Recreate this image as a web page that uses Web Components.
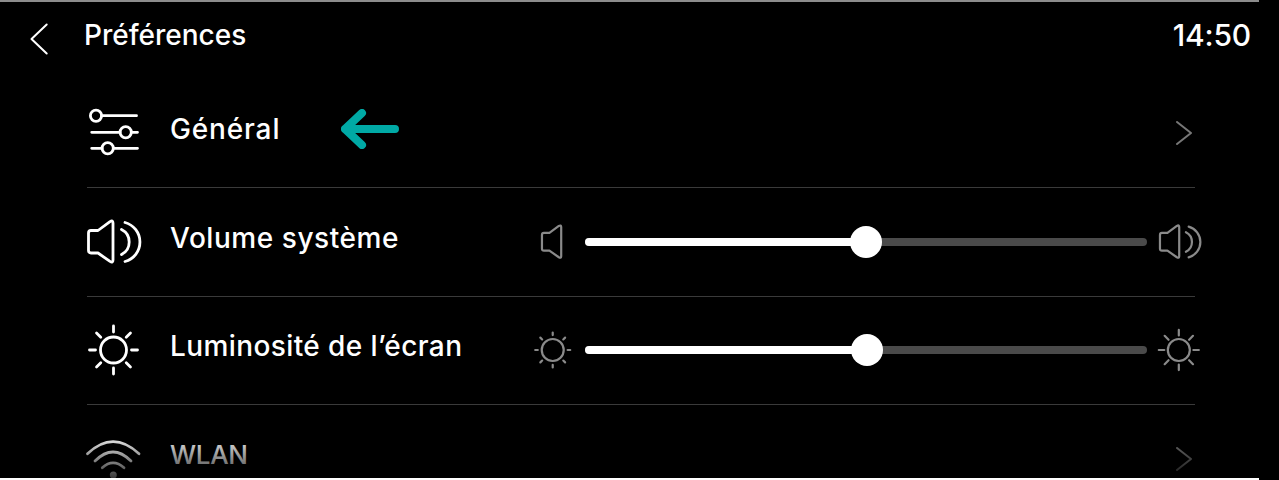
<!DOCTYPE html>
<html lang="fr">
<head>
<meta charset="utf-8">
<title>Préférences</title>
<style>
    html, body { margin: 0; background: #000; }
    body { width: 1279px; height: 480px; overflow: hidden; }
</style>
</head>
<body>
<pref-screen>
    <top-bar title="Préférences" time="14:50"></top-bar>
    <settings-row icon="sliders" style="letter-spacing: .85px">
        Général
        <hint-arrow></hint-arrow>
        <row-chevron slot="control"></row-chevron>
    </settings-row>
    <settings-row icon="speaker" style="letter-spacing: .55px">
        Volume système
        <level-slider slot="control" low="speaker-low" high="speaker-high" value="50"></level-slider>
    </settings-row>
    <settings-row icon="sun" style="letter-spacing: .4px">
        Luminosité de l’écran
        <level-slider slot="control" low="sun-low" high="sun-high" value="50.2"></level-slider>
    </settings-row>
    <settings-row icon="wifi" style="font-size: 26px; letter-spacing: -.3px">
        WLAN
        <row-chevron slot="control"></row-chevron>
    </settings-row>
</pref-screen>

<script>
const speakerBody = '<path d="M5 16.5H12L24 7.6Q27 5.8 27 9V46Q27 49.2 24 47.4L12 39H5Q2.5 39 2.5 36.5V19Q2.5 16.5 5 16.5Z"/>';
const speakerWaves = '<path d="M35.5 15.5A14 14 0 0 1 35.5 40.5"/><path d="M39 8.5A20.2 20.2 0 0 1 39 47.5"/>';

function sunRays(cx, cy, from, to) {
    let d = '';
    for (let i = 0; i < 8; i++) {
        const a = i * Math.PI / 4;
        const c = Math.cos(a), s = Math.sin(a);
        d += `M${(cx + c * from).toFixed(2)} ${(cy + s * from).toFixed(2)}L${(cx + c * to).toFixed(2)} ${(cy + s * to).toFixed(2)}`;
    }
    return `<path d="${d}"/>`;
}

const icons = {
    sliders: {
        box: '0 0 56 56',
        body: `<circle cx="10" cy="10.7" r="5.6"/><path d="M15.6 10.7H50.5"/>
               <circle cx="39.7" cy="27.3" r="5.6"/><path d="M5.7 27.3H34.1M45.3 27.3H51.5"/>
               <circle cx="21.7" cy="43.3" r="5.6"/><path d="M5.7 43.3H16.1M27.3 43.3H51.5"/>`
    },
    speaker: { box: '0 0 56 56', body: speakerBody + speakerWaves },
    sun: {
        box: '0 0 56 56',
        body: '<circle cx="27.5" cy="28" r="13"/>' + sunRays(27.5, 28, 18, 24)
    },
    wifi: {
        box: '0 0 56 56',
        body: `<path d="M1.5 22.7Q27 -1.5 53 22.7"/><path d="M9 30Q27 12 45 30"/><path d="M16.3 36.7Q27 27 38 36.7"/>
               <circle cx="27.3" cy="44" r="3.5" fill="currentColor" stroke="none"/>`
    },
    'speaker-low': { box: '0 0 43.3 56', body: speakerBody },
    'speaker-high': { box: '0 0 56 56', body: speakerBody + speakerWaves },
    'sun-low': {
        box: '0 0 43.3 56',
        body: '<circle cx="16.2" cy="28" r="14"/>' + sunRays(16.2, 28, 19, 22.3)
    },
    'sun-high': {
        box: '0 0 56 56',
        body: '<circle cx="26.5" cy="28" r="14"/>' + sunRays(26.5, 28, 18.5, 25.5)
    }
};

class PrefIcon extends HTMLElement {
    constructor() {
        super();
        this.root = this.attachShadow({ mode: 'open' });
    }

    static get observedAttributes() {
        return ['name'];
    }

    attributeChangedCallback() {
        this.render();
    }

    render() {
        const icon = icons[this.getAttribute('name')];
        this.root.innerHTML = `
            <style>
                :host { display: block; flex: none; line-height: 0; }
                svg { width: 100%; height: 100%; overflow: visible; fill: none; stroke: currentColor; stroke-width: 2.8; stroke-linecap: round; stroke-linejoin: round; }
            </style>
            <svg viewBox="${icon.box}">${icon.body}</svg>`;
    }
}

class PrefScreen extends HTMLElement {
    constructor() {
        super();
        this.root = this.attachShadow({ mode: 'open' });
        this.root.innerHTML = `
            <style>
                :host { display: flex; flex-direction: column; width: 1279px; height: 480px; background: #000; color: #fff; font-family: Inter, "Liberation Sans", sans-serif; font-weight: 500; }
                .edge { flex: none; width: 1259px; height: 2px; }
                .top { background: #8c8c8c; }
                .bottom { background: #fff; }
                .view { position: relative; flex: 1; min-height: 0; overflow: hidden; display: flex; flex-direction: column; }
                .fade { position: absolute; left: 0; right: 0; bottom: 0; height: 46px; background: linear-gradient(rgba(0,0,0,0), rgba(0,0,0,.78)); }
            </style>
            <div class="edge top"></div>
            <div class="view">
                <slot></slot>
                <div class="fade"></div>
            </div>
            <div class="edge bottom"></div>`;
    }
}

class TopBar extends HTMLElement {
    constructor() {
        super();
        this.root = this.attachShadow({ mode: 'open' });
        this.root.innerHTML = `
            <style>
                :host { display: flex; flex: none; align-items: flex-start; box-sizing: border-box; height: 77.5px; padding: 21px 28px 0 31px; }
                svg { flex: none; width: 16px; height: 30px; margin-top: 1px; overflow: visible; fill: none; stroke: #fff; stroke-width: 2; stroke-linecap: round; stroke-linejoin: round; }
                .title { margin-left: 37px; font-size: 28px; line-height: 24px; letter-spacing: 0; }
                .time { margin-left: auto; font-size: 30px; line-height: 24px; letter-spacing: -.2px; }
            </style>
            <svg viewBox="0 0 16 30"><path d="M15.7 0.5L0.5 15L15.7 29.5"/></svg>
            <div class="title"></div>
            <div class="time"></div>`;
    }

    connectedCallback() {
        this.root.querySelector('.title').textContent = this.getAttribute('title');
        this.root.querySelector('.time').textContent = this.getAttribute('time');
    }
}

class SettingsRow extends HTMLElement {
    constructor() {
        super();
        this.root = this.attachShadow({ mode: 'open' });
        this.root.innerHTML = `
            <style>
                :host { display: flex; flex: none; align-items: center; box-sizing: border-box; width: 1108px; height: 108.5px; margin-left: 87px; border-bottom: 1px solid #3a3a3a; font-size: 28px; }
                pref-icon { width: 56px; height: 56px; margin-left: -1px; }
                .label { display: flex; flex: none; align-items: center; box-sizing: border-box; width: 370px; margin-left: 28px; padding-bottom: 8px; white-space: nowrap; }
                .control { flex: 1; min-width: 0; display: flex; justify-content: flex-end; margin-right: -6px; }
            </style>
            <pref-icon></pref-icon>
            <div class="label"><slot></slot></div>
            <div class="control"><slot name="control"></slot></div>`;
    }

    connectedCallback() {
        this.root.querySelector('pref-icon').setAttribute('name', this.getAttribute('icon'));
    }
}

class HintArrow extends HTMLElement {
    constructor() {
        super();
        this.root = this.attachShadow({ mode: 'open' });
        this.root.innerHTML = `
            <style>
                :host { display: block; flex: none; width: 58px; height: 40px; margin-left: 61px; line-height: 0; }
                svg { width: 100%; height: 100%; fill: none; stroke: #00a9a5; stroke-width: 8; stroke-linecap: round; stroke-linejoin: round; }
            </style>
            <svg viewBox="0 0 58 40"><path d="M4 20H54M21 4L4 20L21 36"/></svg>`;
    }
}

class RowChevron extends HTMLElement {
    constructor() {
        super();
        this.root = this.attachShadow({ mode: 'open' });
        this.root.innerHTML = `
            <style>
                :host { display: block; flex: none; width: 16px; height: 24px; margin-right: 9px; line-height: 0; }
                svg { width: 100%; height: 100%; fill: none; stroke: #777; stroke-width: 2; stroke-linecap: round; stroke-linejoin: round; }
            </style>
            <svg viewBox="0 0 16 24"><path d="M1 1L15 12L1 23"/></svg>`;
    }
}

class LevelSlider extends HTMLElement {
    constructor() {
        super();
        this.root = this.attachShadow({ mode: 'open' });
        this.root.innerHTML = `
            <style>
                :host { display: flex; flex: none; align-items: center; width: 661px; color: #8a8a8a; }
                .low { width: 34px; height: 44px; }
                .high { width: 44px; height: 44px; }
                .track { position: relative; flex: none; width: 562px; height: 8px; margin: 0 10.5px 0 11px; border-radius: 4px; background: #4a4a4a; }
                .fill { height: 100%; border-radius: 4px; background: #fff; }
                .thumb { position: absolute; top: 50%; width: 32px; height: 32px; margin: -16px 0 0 -16px; border-radius: 50%; background: #fff; }
            </style>
            <pref-icon class="low"></pref-icon>
            <div class="track"><div class="fill"></div><div class="thumb"></div></div>
            <pref-icon class="high"></pref-icon>`;
    }

    connectedCallback() {
        const value = this.getAttribute('value') + '%';
        this.root.querySelector('.low').setAttribute('name', this.getAttribute('low'));
        this.root.querySelector('.high').setAttribute('name', this.getAttribute('high'));
        this.root.querySelector('.fill').style.width = value;
        this.root.querySelector('.thumb').style.left = value;
    }
}

window.customElements.define('pref-icon', PrefIcon);
window.customElements.define('pref-screen', PrefScreen);
window.customElements.define('top-bar', TopBar);
window.customElements.define('settings-row', SettingsRow);
window.customElements.define('hint-arrow', HintArrow);
window.customElements.define('row-chevron', RowChevron);
window.customElements.define('level-slider', LevelSlider);
</script>
</body>
</html>
